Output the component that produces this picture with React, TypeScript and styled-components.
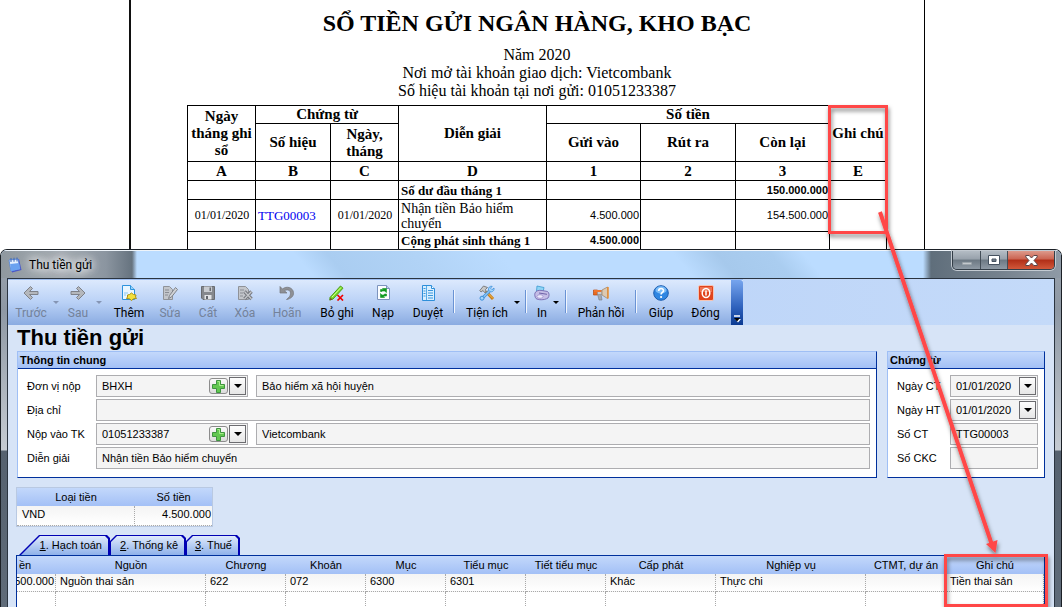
import React from "react";
import styled, { createGlobalStyle } from "styled-components";

const SERIF = '"Liberation Serif", serif';
const SANS = '"Liberation Sans", sans-serif';
const UI = 'Roboto, "Noto Sans", sans-serif';
const NAVY = "#00309c";
const HEAD_FILL = "linear-gradient(#c3d8fb, #a3c0f6)";

const GlobalStyle = createGlobalStyle`
  *, *::before, *::after { box-sizing: border-box; }
  body { margin: 0; background: #fff; color: #000; font-family: ${SANS}; font-size: 11px; }
  button, input { font: inherit; color: inherit; margin: 0; padding: 0; border-radius: 0; }
  table { border-collapse: separate; border-spacing: 0; table-layout: fixed; }
  th, td { padding: 0; overflow: hidden; white-space: nowrap; }
`;

const Page = styled.div`
  position: relative;
  display: flex;
  flex-direction: column;
  height: 100vh;
  overflow: hidden;
`;

/* ---------- printed report ---------- */

const Sheet = styled.section`
  flex: none;
  margin: 0 137px 0 129px;
  padding: 8px 37px 0 56px;
  border-left: 2px solid #111;
  border-right: 1px solid #000;
  font-family: ${SERIF};
`;

const ReportTitle = styled.h1`
  margin: 0 0 7px;
  font-size: 24px;
  line-height: 30px;
  text-align: center;
`;

const ReportLine = styled.p`
  margin: 0;
  font-size: 16px;
  line-height: 18px;
  text-align: center;
  &:first-of-type { line-height: 19px; }
  &:last-of-type { margin-bottom: 5px; }
`;

const ReportTable = styled.table`
  width: 100%;
  border-top: 1px solid #000;
  border-left: 1px solid #000;
  tr:last-child td { border-bottom: 0; }
`;

const ReportHead = styled.th`
  height: ${(p: { $h: number }) => p.$h}px;
  border-right: 1px solid #000;
  border-bottom: 1px solid #000;
  font-size: 15px;
  line-height: 17px;
  white-space: normal;
`;

type CellProps = { $kind?: "label" | "text" | "code" | "date" | "money"; $bold?: boolean; $h?: number };
const sizes = { label: 13, text: 14, code: 13, date: 12, money: 11 };
const ReportCell = styled.td<CellProps>`
  height: ${(p) => p.$h ?? 19}px;
  padding: 0 1px 0 2px;
  border-right: 1px solid #000;
  border-bottom: 1px solid #000;
  font-size: ${(p) => sizes[p.$kind ?? "label"]}px;
  line-height: 15px;
  font-weight: ${(p) => (p.$bold ? 700 : 400)};
  text-align: ${(p) => (p.$kind === "money" ? "right" : p.$kind === "date" ? "center" : "left")};
  font-family: ${(p) => (p.$kind === "money" ? SANS : SERIF)};
  white-space: ${(p) => (p.$kind === "text" ? "normal" : "nowrap")};
`;

const DocLink = styled.a`
  color: #0000f0;
  text-decoration: none;
`;

/* ---------- window frame ---------- */

const WindowFrame = styled.section`
  flex: 1;
  min-height: 0;
  display: flex;
  flex-direction: column;
  border: solid #1b2026;
  border-width: 1px 1px 0;
  border-radius: 7px 7px 0 0;
  background: linear-gradient(#9aa3ad 0, #8e98a4 60px, #c5cbd2 200px, #55616f 201px, #5f6b79);
  overflow: hidden;
`;

const TitleBar = styled.header`
  flex: none;
  display: flex;
  height: 28px;
  padding-left: 7px;
  border-top: 1px solid #eef4fa;
  background:
    linear-gradient(90deg, #8f989f 0, #a4abb2 60px, #8b95a0 105px, #66737f 131px, transparent 136px),
    linear-gradient(270deg, #8f9aa6 0, #76828e 60px, #5f6e7b 130px, transparent 138px),
    linear-gradient(50deg, transparent 29%, #aacdf1 32%, #b1d3f6 40%, transparent 48%, transparent 64%, #a6c9ec 68%, #aacdf0 73%, transparent 76%),
    #bbdcff;
`;

const WindowTitle = styled.h2`
  display: flex;
  align-items: center;
  gap: 7px;
  flex: 1;
  margin: 0;
  font: 400 12px/26px ${UI};
  span { padding: 0 6px; margin-left: -6px; text-shadow: 0 0 8px #fff, 0 0 10px #fff, 0 0 14px #fff; }
`;

const Caption = styled.div`
  display: flex;
  height: 19px;
  border: 1px solid #333d47;
  border-top: 0;
  border-radius: 0 0 5px 5px;
  box-shadow: 0 0 0 1px #c3cad1;
  margin-right: 6px;
  overflow: hidden;
`;

const CaptionButton = styled.button<{ $close?: boolean }>`
  display: grid;
  place-items: center;
  width: ${(p) => (p.$close ? 47 : 27)}px;
  border: 0;
  border-left: 1px solid #444e58;
  background: ${(p) =>
    p.$close
      ? "linear-gradient(#dd9a8c 0, #cb6350 45%, #b12e17 50%, #d2583a)"
      : "linear-gradient(#b4bcc4 0, #97a1ab 45%, #6c7883 50%, #8f9aa5)"};
  &:first-child { border-left: 0; }
`;

const Client = styled.div`
  flex: 1;
  min-height: 0;
  margin: 0 6px;
  border: solid #2a3440;
  border-width: 1px 1px 0;
  background: #d7e4f7;
  overflow: hidden;
`;

/* ---------- toolbar ---------- */

const ToolbarRow = styled.div`
  display: flex;
  height: 46px;
  background: linear-gradient(90deg, #b2cdf7, #c4daf9);
`;

const Toolbar = styled.div`
  display: flex;
  padding-left: 2px;
  background: linear-gradient(#dce9fd 0, #b9d1f6 50%, #8aabe1 100%);
  border-top: 1px solid #9dbdf0;
`;

const ToolButton = styled.button<{ $w: number }>`
  display: flex;
  flex-direction: column;
  align-items: center;
  width: ${(p) => p.$w}px;
  padding-top: 5px;
  border: 0;
  background: none;
  font: 12px/16px ${UI};
  white-space: nowrap;
  svg { display: block; margin-bottom: 4px; }
  &:disabled { color: #74829a; }
`;

const DropButton = styled.button<{ $w: number }>`
  width: ${(p) => p.$w}px;
  border: 0;
  background: none;
  &::before {
    content: "";
    display: block;
    width: 6px;
    margin: 0 auto;
    border: solid transparent;
    border-width: 3px 3px 0;
    border-top-color: #000;
  }
  &:disabled::before { border-top-color: #8595b4; }
`;

const Separator = styled.div`
  width: 2px;
  height: 23px;
  margin: 10px 5px 0;
  border-left: 1px solid #6a93d4;
  border-right: 1px solid #f1f6fe;
`;

const Overflow = styled.button`
  display: flex;
  align-items: flex-end;
  justify-content: center;
  width: 12px;
  padding-bottom: 2px;
  border: 0;
  border-radius: 0 3px 0 0;
  background: linear-gradient(#76a5ee, #2f62bd 60%, #0b3a92);
`;

/* ---------- form ---------- */

const FormTitle = styled.h2`
  margin: 0;
  padding-left: 9px;
  font-size: 22px;
  line-height: 26px;
`;

const Panels = styled.div`
  display: flex;
  gap: 10px;
  padding: 0 9px;
`;

const Panel = styled.fieldset<{ $w?: number }>`
  display: flex;
  flex-direction: column;
  flex: ${(p) => (p.$w ? `0 0 ${p.$w}px` : "1 1 0")};
  min-width: 0;
  margin: 0;
  padding: 0;
  border: 1px solid ${NAVY};
  border-top-color: #9fbff5;
  border-left-color: #9fbff5;
  background: #fff;
`;

const PanelTitle = styled.h3`
  margin: 0;
  padding-left: 2px;
  border-bottom: 1px solid ${NAVY};
  background: ${HEAD_FILL};
  font-size: 11px;
  line-height: 16px;
`;

const PanelBody = styled.div`
  display: flex;
  flex-direction: column;
  gap: 2px;
  padding: 6px 6px 8px 9px;
`;

const FieldRow = styled.div<{ $label: number }>`
  display: grid;
  grid-template-columns: ${(p) => p.$label}px 1fr;
  align-items: center;
  line-height: 22px;
`;

const Pair = styled.div`
  display: grid;
  grid-template-columns: 152px 1fr;
  gap: 8px;
`;

const Box = styled.div`
  display: flex;
  align-items: center;
  height: 22px;
  min-width: 0;
  padding-left: 5px;
  border: 1px solid #adadb0;
  background: #f4f4f4;
`;

const TextInput = styled.input`
  flex: 1;
  min-width: 0;
  width: 100%;
  height: 18px;
  border: 0;
  background: none;
  outline: 0;
`;

const ComboButton = styled.button`
  display: grid;
  place-items: center;
  width: 17px;
  height: 18px;
  margin: 0 1px;
  border: 1px solid #6c6c70;
  background: linear-gradient(#fdfdfd, #e6e6e6);
`;

const AddButton = styled.button`
  display: grid;
  place-items: center;
  width: 19px;
  height: 16px;
  border: 1px solid #8c8c8c;
  border-radius: 3px;
  background: linear-gradient(#fafafa, #dcdcdc);
`;

/* ---------- grids ---------- */

const Grid = styled.table`
  th {
    height: 18px;
    background: ${HEAD_FILL};
    font-weight: 400;
    line-height: 18px;
  }
  td {
    height: 18px;
    padding: 0 1px 3px 4px;
    border-right: 1px dotted #a9a9a9;
    border-bottom: 1px dotted #a9a9a9;
    background: linear-gradient(#f4f4f4, #fff);
    line-height: 14px;
  }
`;

const CurrencyGrid = styled(Grid)`
  width: 197px;
  margin: 9px 0 8px 8px;
  border: 1px solid #b9c9e2;
  td { height: 20px; padding: 0 1px 4px 5px; }
  td:last-child { border-right: 0; text-align: right; }
`;

const DetailBox = styled.div`
  margin: 0 9px 0 8px;
  border: 1px solid ${NAVY};
  border-bottom: 0;
  background: #fff;
`;

const DetailGrid = styled(Grid)`
  width: 100%;
  th:first-child { padding-left: 2px; text-align: left; }
  td:first-child { padding: 0 1px 3px 0; }
  tr + tr td { height: 30px; background: #fff; }
`;

/* amount scrolled partly out of view at the left edge of the grid */
const ScrolledAmount = styled.div`
  display: flex;
  justify-content: flex-end;
`;

const TabStrip = styled.div`
  display: flex;
  padding-left: 11px;
`;

const Tab = styled.button<{ $w: number; $slant: number; $drop: number }>`
  position: relative;
  z-index: 0;
  width: ${(p) => p.$w}px;
  height: 20px;
  padding: 0 8px 0 0;
  border: 0;
  background: none;
  line-height: 20px;
  text-align: right;
  white-space: nowrap;
  &::before,
  &::after {
    content: "";
    position: absolute;
    z-index: -1;
    inset: 0;
    background: #0000b4;
    clip-path: polygon(0 ${(p) => p.$drop}px, ${(p) => p.$slant}px 0, calc(100% - 3px) 0, 100% 3px, 100% 100%, 0 100%);
  }
  &::after {
    inset: 1px 2px 0 1px;
    background: linear-gradient(#dfeafc, #8fb1ea);
  }
`;

/* ---------- annotations drawn over the page ---------- */

const Annotations = styled.svg`
  position: absolute;
  top: 0;
  right: 0;
  pointer-events: none;
`;

/* ---------- icons ---------- */

const Icon = ({ children }: { children: React.ReactNode }) => (
  <svg width="16" height="16" viewBox="0 0 16 16" aria-hidden="true">{children}</svg>
);

const icons = {
  back: <Icon><path d="M1 8 7.500 1.500 9.500 3.500 6.500 6.500H15V9.500H6.500L9.500 12.500 7.500 14.500Z" fill="#b4b7bc" stroke="#7e8188" /></Icon>,
  next: <Icon><path d="M15 8 8.500 1.500 6.500 3.500 9.500 6.500H1V9.500H9.500L6.500 12.500 8.500 14.500Z" fill="#b4b7bc" stroke="#7e8188" /></Icon>,
  add: (
    <Icon>
      <path d="M1.500.5H9.500L13.500 4.500V14.500H1.500Z" fill="#e9f6ff" stroke="#2d93dd" />
      <path d="M9.500.5V4.500H13.500" fill="#9cd3f8" stroke="#2d93dd" />
      <path d="M3 8H7M3 10H5" stroke="#8bc6f0" />
      <path d="M6.500 10 8.500 9.500 10.500 8 12.500 9.500 15 10 14.500 12 15.500 13.500 12.500 13.800 10.500 15.500 8.500 13.800 5.500 13.500 6.500 12Z" fill="#f3e03c" stroke="#a89016" />
    </Icon>
  ),
  edit: (
    <Icon>
      <path d="M1.500 1.500H7.500L10.500 4.500V14.500H1.500Z" fill="#c3c6cb" stroke="#8f9298" />
      <path d="M3 5H7M3 7.500H7M3 10H6" stroke="#8a8d94" />
      <path d="M13.500 2.500 15.500 4.500 9.500 12 6.500 13.500 7.500 10.500Z" fill="#d0d2d6" stroke="#7f8289" />
    </Icon>
  ),
  save: (
    <Icon>
      <path d="M1.500 1.500H14.500V14.500H3L1.500 13Z" fill="#85888d" stroke="#696c71" />
      <path d="M4 1.500H12V7H4Z" fill="#c9ccd1" />
      <path d="M9.500 2.500H11V6H9.500Z" fill="#696c71" />
      <path d="M4.500 10H11.500V14.500H4.500Z" fill="#e2e4e7" />
      <path d="M6 11H8V14H6Z" fill="#62666d" />
    </Icon>
  ),
  remove: (
    <Icon>
      <path d="M1.500 1.500H8.500L11.500 4.500V14.500H1.500Z" fill="#c3c6cb" stroke="#8f9298" />
      <path d="M3 5H7M3 8H6M3 11H6" stroke="#8a8d94" />
      <path d="M7.500 6.500 14.500 14M14.500 6.500 7.500 14" stroke="#777a80" strokeWidth="3.400" />
      <path d="M7.500 6.500 14.500 14M14.500 6.500 7.500 14" stroke="#c6c8cc" strokeWidth="1.200" />
    </Icon>
  ),
  undo: (
    <Icon>
      <path d="M1 1.500V8H8L5.500 5.800C8 4 11.500 5 11.500 8.200C11.500 11 10 12.500 7.500 14.500C12 13.800 15 11 14.500 7.500C14 2.500 7.500.5 3.500 4Z" fill="#8e9095" stroke="#74767b" strokeWidth=".7" />
    </Icon>
  ),
  unpost: (
    <Icon>
      <path d="M1 12.500 11.500 1 14 3.200 4 14 .8 15Z" fill="#7be02c" stroke="#4a9a14" />
      <path d="M3 12 12 2.500" stroke="#d0ff95" />
      <path d="M.5 15.500 1.500 12.500 3.500 14.500Z" fill="#7a5a20" />
      <path d="M8.500 10 14 15.500M14 10 8.500 15.500" stroke="#f00000" strokeWidth="1.700" />
    </Icon>
  ),
  reload: (
    <Icon>
      <path d="M2.500.5H11.500L14.500 3.500V14.500H2.500Z" fill="#fbfdff" stroke="#7c93bd" />
      <path d="M11.500.5V3.500H14.500" fill="#c3d0e8" stroke="#7c93bd" />
      <path d="M5.500 6.500V4.500H8.500L7.500 3.500H11.500V7.500L9.500 6H7.500L7 6.500ZM11.500 9V11H8.500L9.500 12.500H5.500V8.500L7 10H9L9.500 9Z" fill="#109a20" stroke="#109a20" strokeWidth=".6" />
    </Icon>
  ),
  browse: (
    <Icon>
      <path d="M2.500.5H11.500L14.500 3.500V15.500H2.500Z" fill="#d9efff" stroke="#2e8fda" />
      <path d="M11.500.5V3.500H14.500" fill="#fff" stroke="#2e8fda" />
      <path d="M6.500 1V15" stroke="#57abe8" />
      <path d="M3.500 3.500H5.500M3.500 6H5.500M3.500 8.500H5.500M3.500 11H5.500M8 5.500H13M8 8H13M8 10.500H13M8 13H13" stroke="#3b97dc" />
    </Icon>
  ),
  tools: (
    <Icon>
      <path d="M7 6.500 14 14" stroke="#c77d16" strokeWidth="3" />
      <path d="M7.500 7 14 13.500" stroke="#f7bc55" />
      <path d="M.8 5.500 4.500 1 8.500 2.500 6.500 4.500 7 6.500 5.500 7.500 4 5.500 2 7Z" fill="#c8c8c8" stroke="#696969" strokeWidth=".8" />
      <path d="M2.500 14 10.500 6" stroke="#4595dc" strokeWidth="3" />
      <path d="M2.500 14 10.500 6" stroke="#c5e6ff" />
      <path d="M9.500 5C9 2.500 11 .8 13.200 1.300L11.500 3.200 13 4.700 15 3C15.500 5.500 13.500 7.500 11 6.700Z" fill="#a3d4fb" stroke="#3d8fd8" strokeWidth=".8" />
      <circle cx="3" cy="13.200" r="2" fill="#a3d4fb" stroke="#3d8fd8" />
    </Icon>
  ),
  print: (
    <Icon>
      <path d="M3 1 10 2.500 9 7 2.500 6Z" fill="#8fd4f5" stroke="#3c9ad0" strokeWidth=".8" />
      <path d="M1 8C2 5.500 5 5 8 5.500L13.500 6.500C15.500 8 15.500 11 14 13C10 15.500 4 15 2 13.500C.8 12 .5 9.500 1 8Z" fill="#c5bde6" stroke="#7569b0" strokeWidth=".9" />
      <path d="M5 8 13 9.300" stroke="#6d62a6" />
      <ellipse cx="6" cy="11.500" rx="3" ry="1.800" fill="#eeeafc" stroke="#8b80c2" strokeWidth=".6" />
    </Icon>
  ),
  feedback: (
    <Icon>
      <path d="M4.500 9 6 15H9L8 9Z" fill="#a4a9b1" stroke="#757a83" strokeWidth=".6" />
      <path d="M.5 5H4.500V10H.5Z" fill="#ea6a20" stroke="#b9470c" strokeWidth=".7" />
      <path d="M4.500 5.500H9V9.500H4.500Z" fill="#c9ccd1" stroke="#8b8f96" strokeWidth=".6" />
      <path d="M1 6H8.500" stroke="#f0762e" strokeWidth="2" />
      <path d="M9 5 14.500 2V13.500L9 10Z" fill="#dcc9b2" stroke="#9a7e60" strokeWidth=".7" />
      <path d="M15 2V13.500" stroke="#eb8e2e" strokeWidth="1.500" />
    </Icon>
  ),
  help: (
    <Icon>
      <circle cx="8" cy="8" r="7.300" fill="#2f86e2" stroke="#1b5cae" />
      <ellipse cx="8" cy="5" rx="5.500" ry="3.700" fill="#7cbcf7" />
      <path d="M5.700 6C5.700 2.800 10.500 2.800 10.500 5.700C10.500 7.500 8.100 7.500 8.100 9.500" fill="none" stroke="#fff" strokeWidth="1.600" />
      <circle cx="8.100" cy="12" r="1.100" fill="#fff" />
    </Icon>
  ),
  close: (
    <Icon>
      <rect x=".5" y=".5" width="15" height="15" rx="1.500" fill="#e0431c" stroke="#f5c4b4" />
      <rect x="2" y="2" width="12" height="5" fill="#ee7350" />
      <ellipse cx="8" cy="8" rx="3.800" ry="4.500" fill="none" stroke="#fff" strokeWidth="1.500" />
      <path d="M8 5.500V10.500" stroke="#fff" strokeWidth="1.500" />
    </Icon>
  ),
};

const AppIcon = () => (
  <svg width="14" height="16" viewBox="0 0 14 16" aria-hidden="true">
    <path d="M2 3 11 2 13.500 13 4 15.500Z" fill="#4a55c8" />
    <path d="M1 3 10 2 12 12 3 14Z" fill="#e5f1ff" stroke="#4c83dd" strokeWidth=".8" />
    <path d="M2.200 7 11 6 12 12 3 14Z" fill="#6aa2f0" />
    <path d="M3 1V5M6 .7V4.700M9 .5V4.500" stroke="#3c67b5" />
  </svg>
);

const DownArrow = () => (
  <svg width="8" height="4" viewBox="0 0 8 4" aria-hidden="true"><path d="M0 0H8L4 4Z" /></svg>
);

const PlusIcon = () => (
  <svg width="13" height="13" viewBox="0 0 13 13" aria-hidden="true">
    <path d="M4.500.5H8.500V4.500H12.500V8.500H8.500V12.500H4.500V8.500H.5V4.500H4.500Z" fill="#62c850" stroke="#3f9440" />
    <path d="M5.500 1.500H7.500V5.500H11.500" fill="none" stroke="#a8ee8d" />
  </svg>
);

/* ---------- field helpers ---------- */

const Combo = ({ id, value, add, label }: { id: string; value: string; add?: boolean; label: string }) => (
  <Box>
    <TextInput id={id} defaultValue={value} />
    {add && <AddButton type="button" aria-label={`Thêm ${label}`}><PlusIcon /></AddButton>}
    <ComboButton type="button" aria-label={`Chọn ${label}`}><DownArrow /></ComboButton>
  </Box>
);

const Text = ({ id, value = "", label }: { id: string; value?: string; label?: string }) => (
  <Box><TextInput id={id} defaultValue={value} aria-label={label} /></Box>
);

const detailColumns = [
  { name: "Nguồn", w: 150, value: "Nguồn thai sản" },
  { name: "Chương", w: 80, value: "622" },
  { name: "Khoản", w: 80, value: "072" },
  { name: "Mục", w: 80, value: "6300" },
  { name: "Tiểu mục", w: 80, value: "6301" },
  { name: "Tiết tiểu mục", w: 80, value: "" },
  { name: "Cấp phát", w: 110, value: "Khác" },
  { name: "Nghiệp vụ", w: 150, value: "Thực chi" },
  { name: "CTMT, dự án", w: 80, value: "" },
  { name: "Ghi chú", w: 0, value: "Tiền thai sản" },
];

export default function App() {
  return (
    <Page>
      <GlobalStyle />

      <Sheet>
        <ReportTitle>SỔ TIỀN GỬI NGÂN HÀNG, KHO BẠC</ReportTitle>
        <ReportLine>Năm 2020</ReportLine>
        <ReportLine>Nơi mở tài khoản giao dịch: Vietcombank</ReportLine>
        <ReportLine>Số hiệu tài khoản tại nơi gửi: 01051233387</ReportLine>
        <ReportTable>
          <colgroup>
            <col style={{ width: 68 }} /><col style={{ width: 75 }} /><col style={{ width: 68 }} />
            <col />
            <col style={{ width: 94 }} /><col style={{ width: 95 }} /><col style={{ width: 94 }} /><col style={{ width: 57 }} />
          </colgroup>
          <thead>
            <tr>
              <ReportHead $h={18} rowSpan={2}>Ngày tháng ghi sổ</ReportHead>
              <ReportHead $h={18} colSpan={2}>Chứng từ</ReportHead>
              <ReportHead $h={18} rowSpan={2}>Diễn giải</ReportHead>
              <ReportHead $h={18} colSpan={3}>Số tiền</ReportHead>
              <ReportHead $h={18} rowSpan={2}>Ghi chú</ReportHead>
            </tr>
            <tr>
              <ReportHead $h={38}>Số hiệu</ReportHead>
              <ReportHead $h={38}>Ngày, tháng</ReportHead>
              <ReportHead $h={38}>Gửi vào</ReportHead>
              <ReportHead $h={38}>Rút ra</ReportHead>
              <ReportHead $h={38}>Còn lại</ReportHead>
            </tr>
            <tr>
              {["A", "B", "C", "D", "1", "2", "3", "E"].map((c) => <ReportHead $h={19} key={c}>{c}</ReportHead>)}
            </tr>
          </thead>
          <tbody>
            <tr>
              <ReportCell /><ReportCell /><ReportCell />
              <ReportCell $bold>Số dư đầu tháng 1</ReportCell>
              <ReportCell /><ReportCell />
              <ReportCell $kind="money" $bold>150.000.000</ReportCell>
              <ReportCell />
            </tr>
            <tr>
              <ReportCell $kind="date" $h={32}>01/01/2020</ReportCell>
              <ReportCell $kind="code"><DocLink href="#TTG00003">TTG00003</DocLink></ReportCell>
              <ReportCell $kind="date">01/01/2020</ReportCell>
              <ReportCell $kind="text">Nhận tiền Bảo hiểm chuyển</ReportCell>
              <ReportCell $kind="money">4.500.000</ReportCell>
              <ReportCell />
              <ReportCell $kind="money">154.500.000</ReportCell>
              <ReportCell />
            </tr>
            <tr>
              <ReportCell $h={17} /><ReportCell $h={17} /><ReportCell $h={17} />
              <ReportCell $bold $h={17}>Cộng phát sinh tháng 1</ReportCell>
              <ReportCell $kind="money" $bold $h={17}>4.500.000</ReportCell>
              <ReportCell $h={17} /><ReportCell $h={17} /><ReportCell $h={17} />
            </tr>
          </tbody>
        </ReportTable>
      </Sheet>

      <WindowFrame>
        <TitleBar>
          <WindowTitle><AppIcon /><span>Thu tiền gửi</span></WindowTitle>
          <Caption>
            <CaptionButton aria-label="Thu nhỏ">
              <svg width="12" height="12" viewBox="0 0 12 12"><path d="M1.500 8.500H10.500V10.500H1.500Z" fill="#c3c8cd" stroke="#9aa2aa" strokeWidth=".6" /></svg>
            </CaptionButton>
            <CaptionButton aria-label="Phóng to">
              <svg width="12" height="11" viewBox="0 0 12 11"><path fillRule="evenodd" d="M.5.5H11.500V9.500H.5ZM4 4V6.500H8V4Z" fill="#fff" stroke="#465260" /></svg>
            </CaptionButton>
            <CaptionButton $close aria-label="Đóng cửa sổ">
              <svg width="13" height="11" viewBox="0 0 13 11"><path d="M.8.5H4.200L6.500 3 8.800.5H12.200V2L9 5.500 12.200 9V10.500H8.800L6.500 8 4.200 10.500H.8V9L4 5.500.8 2Z" fill="#fff" stroke="#5a4448" /></svg>
            </CaptionButton>
          </Caption>
        </TitleBar>

        <Client>
          <ToolbarRow>
            <Toolbar role="toolbar">
              <ToolButton $w={42} disabled>{icons.back}Trước</ToolButton>
              <DropButton $w={8} disabled aria-label="Tùy chọn Trước" />
              <ToolButton $w={36} disabled>{icons.next}Sau</ToolButton>
              <DropButton $w={6} disabled aria-label="Tùy chọn Sau" />
              <ToolButton $w={54}>{icons.add}Thêm</ToolButton>
              <ToolButton $w={28} disabled>{icons.edit}Sửa</ToolButton>
              <ToolButton $w={48} disabled>{icons.save}Cất</ToolButton>
              <ToolButton $w={26} disabled>{icons.remove}Xóa</ToolButton>
              <ToolButton $w={58} disabled>{icons.undo}Hoãn</ToolButton>
              <ToolButton $w={42}>{icons.unpost}Bỏ ghi</ToolButton>
              <ToolButton $w={50}>{icons.reload}Nạp</ToolButton>
              <ToolButton $w={40}>{icons.browse}Duyệt</ToolButton>
              <Separator />
              <ToolButton $w={54}>{icons.tools}Tiện ích</ToolButton>
              <DropButton $w={6} aria-label="Tùy chọn Tiện ích" />
              <Separator />
              <ToolButton $w={20}>{icons.print}In</ToolButton>
              <DropButton $w={8} aria-label="Tùy chọn In" />
              <Separator />
              <ToolButton $w={58}>{icons.feedback}Phản hồi</ToolButton>
              <Separator />
              <ToolButton $w={38}>{icons.help}Giúp</ToolButton>
              <ToolButton $w={51}>{icons.close}Đóng</ToolButton>
              <Overflow aria-label="Tùy chọn thanh công cụ">
                <svg width="8" height="8" viewBox="0 0 8 8"><path d="M1 1H7" stroke="#fff" strokeWidth="1.500" /><path d="M2 4H8L5 7.500Z" fill="#fff" /><path d="M1 3H7L4 6.500Z" /></svg>
              </Overflow>
            </Toolbar>
          </ToolbarRow>

          <FormTitle>Thu tiền gửi</FormTitle>

          <Panels>
            <Panel>
              <PanelTitle>Thông tin chung</PanelTitle>
              <PanelBody>
                <FieldRow $label={69}>
                  <label htmlFor="payer">Đơn vị nộp</label>
                  <Pair><Combo id="payer" value="BHXH" add label="đơn vị nộp" /><Text id="payerName" value="Bảo hiểm xã hội huyện" label="Tên đơn vị nộp" /></Pair>
                </FieldRow>
                <FieldRow $label={69}>
                  <label htmlFor="address">Địa chỉ</label>
                  <Text id="address" />
                </FieldRow>
                <FieldRow $label={69}>
                  <label htmlFor="account">Nộp vào TK</label>
                  <Pair><Combo id="account" value="01051233387" add label="tài khoản" /><Text id="bank" value="Vietcombank" label="Ngân hàng" /></Pair>
                </FieldRow>
                <FieldRow $label={69}>
                  <label htmlFor="memo">Diễn giải</label>
                  <Text id="memo" value="Nhận tiền Bảo hiểm chuyển" />
                </FieldRow>
              </PanelBody>
            </Panel>

            <Panel $w={158}>
              <PanelTitle>Chứng từ</PanelTitle>
              <PanelBody>
                <FieldRow $label={53}>
                  <label htmlFor="docDate">Ngày CT</label>
                  <Combo id="docDate" value="01/01/2020" label="ngày CT" />
                </FieldRow>
                <FieldRow $label={53}>
                  <label htmlFor="postDate">Ngày HT</label>
                  <Combo id="postDate" value="01/01/2020" label="ngày HT" />
                </FieldRow>
                <FieldRow $label={53}>
                  <label htmlFor="docNo">Số CT</label>
                  <Text id="docNo" value="TTG00003" />
                </FieldRow>
                <FieldRow $label={53}>
                  <label htmlFor="ckc">Số CKC</label>
                  <Text id="ckc" />
                </FieldRow>
              </PanelBody>
            </Panel>
          </Panels>

          <CurrencyGrid>
            <colgroup><col style={{ width: 118 }} /><col /></colgroup>
            <thead><tr><th>Loại tiền</th><th>Số tiền</th></tr></thead>
            <tbody><tr><td>VND</td><td>4.500.000</td></tr></tbody>
          </CurrencyGrid>

          <TabStrip role="tablist">
            <Tab role="tab" aria-selected="true" $w={91} $slant={20} $drop={20}><u>1</u>. Hạch toán</Tab>
            <Tab role="tab" aria-selected="false" $w={76} $slant={6} $drop={6}><u>2</u>. Thống kê</Tab>
            <Tab role="tab" aria-selected="false" $w={54} $slant={6} $drop={6}><u>3</u>. Thuế</Tab>
          </TabStrip>

          <DetailBox>
            <DetailGrid>
              <colgroup>
                <col style={{ width: 39 }} />
                {detailColumns.map((c) => <col key={c.name} style={c.w ? { width: c.w } : undefined} />)}
              </colgroup>
              <thead>
                <tr>
                  <th>ền</th>
                  {detailColumns.map((c) => <th key={c.name}>{c.name}</th>)}
                </tr>
              </thead>
              <tbody>
                <tr>
                  <td><ScrolledAmount>500.000</ScrolledAmount></td>
                  {detailColumns.map((c) => <td key={c.name}>{c.value}</td>)}
                </tr>
                <tr>
                  <td />
                  {detailColumns.map((c) => <td key={c.name} />)}
                </tr>
              </tbody>
            </DetailGrid>
          </DetailBox>
        </Client>
      </WindowFrame>

      <Annotations width="262" height="607" viewBox="800 0 262 607" aria-hidden="true">
        <defs>
          <filter id="soft" x="-20%" y="-20%" width="140%" height="140%">
            <feDropShadow dx="1" dy="3" stdDeviation="2" floodColor="#000" floodOpacity=".5" />
          </filter>
        </defs>
        <g filter="url(#soft)" fill="none" stroke="#ff4747" strokeWidth="3">
          <rect x="829.500" y="106.500" width="57" height="126" />
          <rect x="945.500" y="555.500" width="101" height="50" />
          <path d="M880 212 992 545" strokeWidth="4" />
          <path d="M986 544 997.500 540 995.500 553Z" fill="#ff4747" stroke="none" />
        </g>
      </Annotations>
    </Page>
  );
}
